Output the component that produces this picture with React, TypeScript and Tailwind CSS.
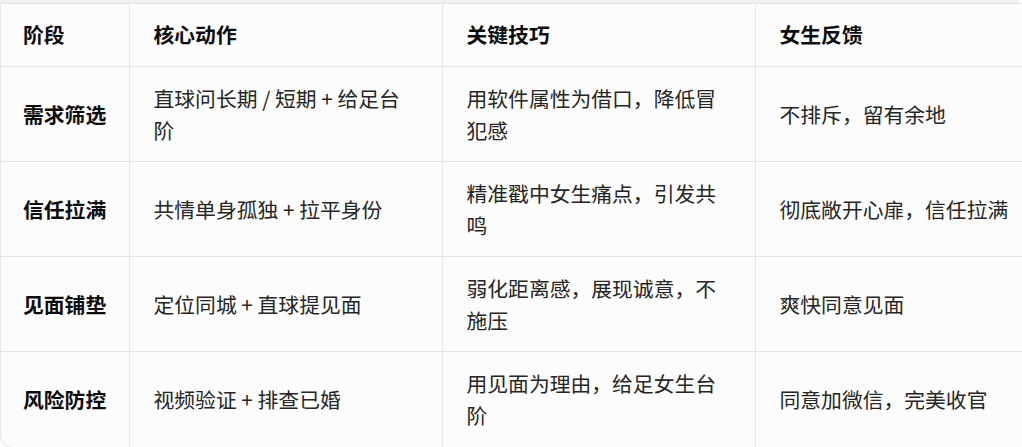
import React from "react";

const rows: [string, string, string, string][] = [
  ["需求筛选", "直球问长期 / 短期 + 给足台阶", "用软件属性为借口，降低冒犯感", "不排斥，留有余地"],
  ["信任拉满", "共情单身孤独 + 拉平身份", "精准戳中女生痛点，引发共鸣", "彻底敞开心扉，信任拉满"],
  ["见面铺垫", "定位同城 + 直球提见面", "弱化距离感，展现诚意，不施压", "爽快同意见面"],
  ["风险防控", "视频验证 + 排查已婚", "用见面为理由，给足女生台阶", "同意加微信，完美收官"],
];

const headers = ["阶段", "核心动作", "关键技巧", "女生反馈"];

export default function App() {
  return (
    <div
      className="w-[1022px] h-[447px] overflow-hidden bg-white"
      style={{ fontFamily: '"Noto Sans CJK SC", "Noto Sans", sans-serif' }}
    >
      <div className="h-[3px] w-[1019px] bg-[#eff0f3]" />
      <div className="w-[1069px] border border-[#e6e6e8] rounded-bl-[12px] overflow-hidden bg-[#fcfcfd]">
        <table className="table-fixed border-collapse w-[1067px] text-[20.8px] leading-[32px]">
          <colgroup>
            <col className="w-[128px]" />
            <col className="w-[313px]" />
            <col className="w-[313px]" />
            <col className="w-[313px]" />
          </colgroup>
          <thead>
            <tr className="border-b border-[#e6e6e8]">
              {headers.map((h, i) => (
                <th
                  key={h}
                  className={
                    "text-left font-bold text-[#0d0d0d] pt-[14px] pb-[16px] align-middle" +
                    (i > 0 ? " pl-[24px] pr-[26px] border-l border-[#e6e6e8]" : " pl-[22px] pr-[8px] whitespace-nowrap")
                  }
                >
                  {h}
                </th>
              ))}
            </tr>
          </thead>
          <tbody>
            {rows.map((r, ri) => (
              <tr key={ri} className={ri < rows.length - 1 ? "border-b border-[#e6e6e8]" : ""}>
                {r.map((c, ci) => (
                  <td
                    key={ci}
                    className={
                      "py-[15px] h-[95px] align-middle" +
                      (ci === 0
                        ? " pl-[22px] pr-[8px] whitespace-nowrap font-bold text-[#0d0d0d]"
                        : " pl-[24px] pr-[26px] text-[#262626] border-l border-[#e6e6e8]")
                    }
                  >
                    {c}
                  </td>
                ))}
              </tr>
            ))}
          </tbody>
        </table>
      </div>
    </div>
  );
}
